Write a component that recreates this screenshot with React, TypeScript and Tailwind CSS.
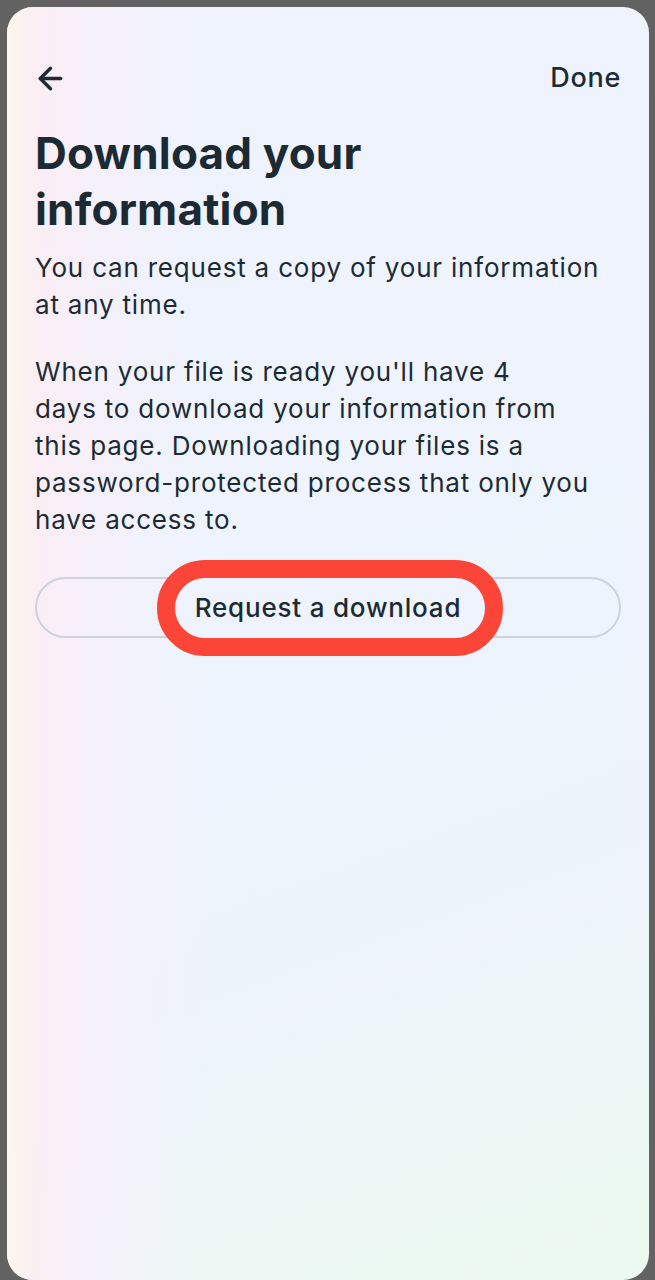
import { ArrowLeft } from 'lucide-react';

export default function App() {
  return (
    <div className="w-[655px] h-[1280px] bg-[#626262] pt-[7px] pl-[7px] pr-[6px] overflow-hidden font-['Inter',sans-serif] text-[#1c2b33]">
      <div className="relative h-[1273px] rounded-[26px] overflow-hidden bg-[linear-gradient(160deg,#eff2fd_0%,#eef4fd_45%,#edf3fb_70%,#ecfaf0_100%)]">
        {/* warm edge on the left */}
        <div className="absolute inset-0 bg-[linear-gradient(90deg,#fff6ec_0%,#fcedf3_5%,#f5f0fa_14%,rgba(240,243,253,0)_30%)] opacity-90" />

        <div className="relative px-[28px]">
          {/* Top bar */}
          <div className="flex items-center justify-between h-[60px] mt-[41px]">
            <ArrowLeft className="w-[35px] h-[35px] -ml-[2px]" strokeWidth={2.3} />
            <span className="text-[27px] font-medium tracking-[0.7px]">Done</span>
          </div>

          {/* Title */}
          <h1 className="mt-[17px] text-[44px] leading-[56px] font-bold tracking-[0.2px]">
            Download your
            <br />
            information
          </h1>

          <p className="mt-[12px] text-[26px] leading-[37px] tracking-[0.8px]">
            You can request a copy of your information
            <br />
            at any time.
          </p>

          <p className="mt-[30px] text-[26px] leading-[37px] tracking-[0.8px]">
            When your file is ready you'll have 4
            <br />
            days to download your information from
            <br />
            this page. Downloading your files is a
            <br />
            password-protected process that only you
            <br />
            have access to.
          </p>

          {/* Button with red highlight */}
          <div className="relative mt-[39px] h-[61px] rounded-full border-2 border-[#cbd2d9] flex items-center justify-center">
            <div className="absolute left-[120px] top-[-19px] w-[346px] h-[96px] rounded-[48px] border-[18px] border-[#fb4538] bg-[#eef3fd]" />
            <span className="relative text-[26px] font-medium tracking-[0.8px]">Request a download</span>
          </div>
        </div>
      </div>
    </div>
  );
}
